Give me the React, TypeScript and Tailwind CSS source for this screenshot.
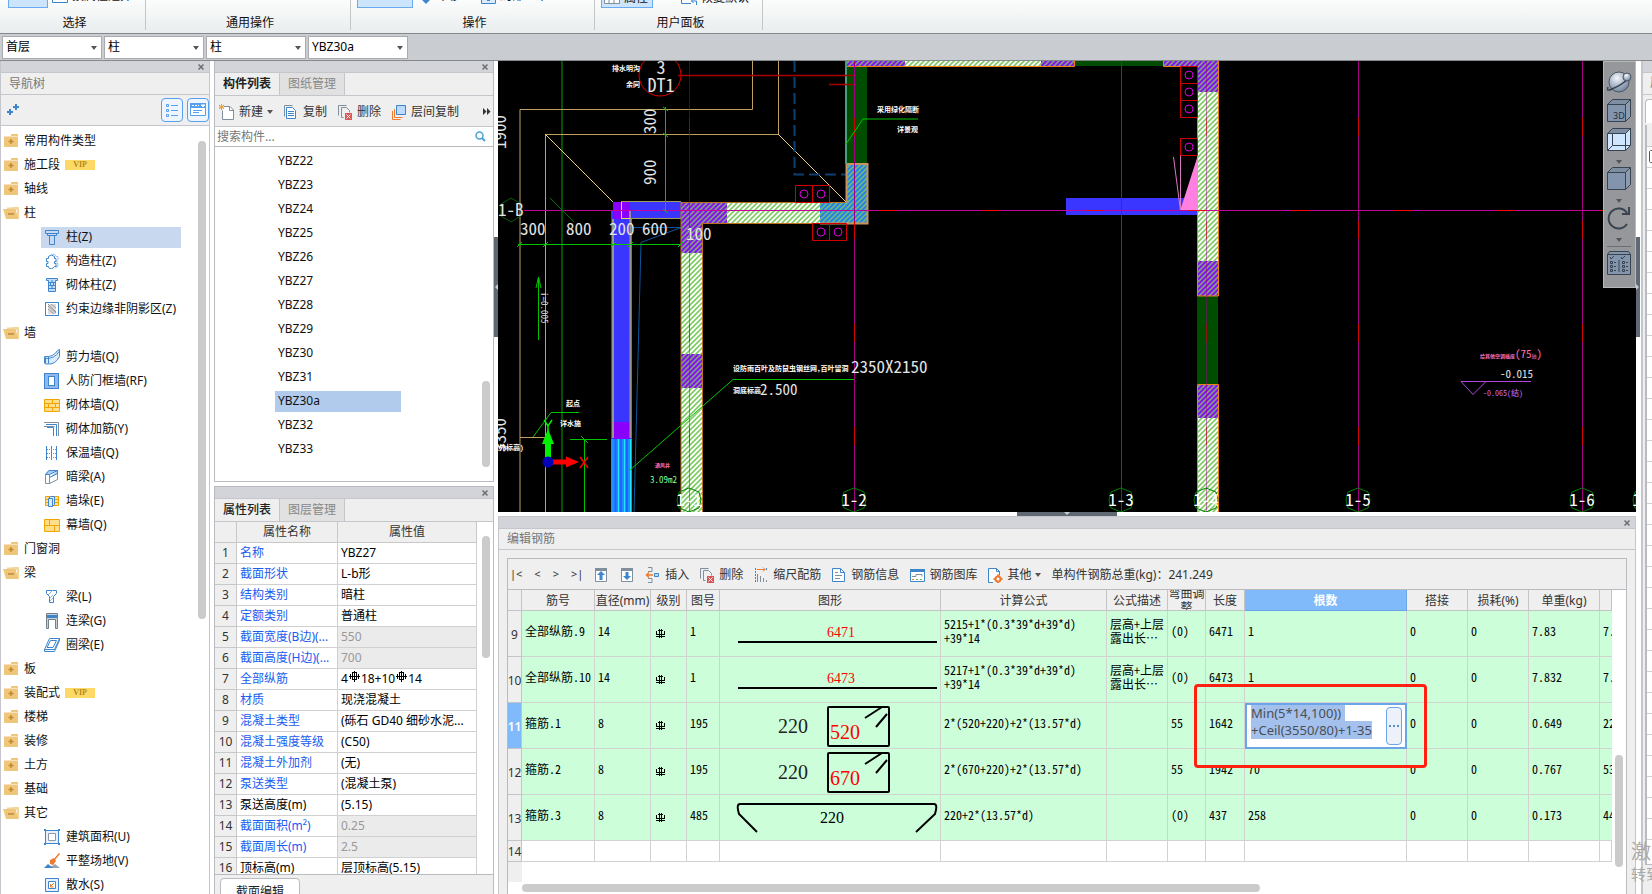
import React from "react";

const navItems = [
  { label: "常用构件类型", icon: "closed" },
  { label: "施工段", icon: "closed", vip: true },
  { label: "轴线", icon: "closed" },
  { label: "柱", icon: "open" },
  { label: "柱(Z)", icon: "column", child: true, active: true },
  { label: "构造柱(Z)", icon: "tieColumn", child: true },
  { label: "砌体柱(Z)", icon: "brickColumn", child: true },
  { label: "约束边缘非阴影区(Z)", icon: "edgeZone", child: true },
  { label: "墙", icon: "open" },
  { label: "剪力墙(Q)", icon: "shearWall", child: true },
  { label: "人防门框墙(RF)", icon: "doorFrame", child: true },
  { label: "砌体墙(Q)", icon: "brick", child: true },
  { label: "砌体加筋(Y)", icon: "rebar", child: true },
  { label: "保温墙(Q)", icon: "insulation", child: true },
  { label: "暗梁(A)", icon: "hiddenBeam", child: true },
  { label: "墙垛(E)", icon: "pier", child: true },
  { label: "幕墙(Q)", icon: "curtain", child: true },
  { label: "门窗洞", icon: "closed" },
  { label: "梁", icon: "open" },
  { label: "梁(L)", icon: "beam", child: true },
  { label: "连梁(G)", icon: "linkBeam", child: true },
  { label: "圈梁(E)", icon: "ringBeam", child: true },
  { label: "板", icon: "closed" },
  { label: "装配式", icon: "closed", vip: true },
  { label: "楼梯", icon: "closed" },
  { label: "装修", icon: "closed" },
  { label: "土方", icon: "closed" },
  { label: "基础", icon: "closed" },
  { label: "其它", icon: "open" },
  { label: "建筑面积(U)", icon: "area", child: true },
  { label: "平整场地(V)", icon: "site", child: true },
  { label: "散水(S)", icon: "apron", child: true },
];

const components = [
  "YBZ22", "YBZ23", "YBZ24", "YBZ25", "YBZ26", "YBZ27", "YBZ28",
  "YBZ29", "YBZ30", "YBZ31", "YBZ30a", "YBZ32", "YBZ33",
];

const properties: { name: string; value: React.ReactNode; black?: boolean; locked?: boolean }[] = [
  { name: "名称", value: "YBZ27" },
  { name: "截面形状", value: "L-b形" },
  { name: "结构类别", value: "暗柱" },
  { name: "定额类别", value: "普通柱" },
  { name: "截面宽度(B边)(...", value: "550", locked: true },
  { name: "截面高度(H边)(...", value: "700", locked: true },
  {
    name: "全部纵筋",
    value: (
      <span className="flex items-center">
        4<GradeMark />18+10<GradeMark />14
      </span>
    ),
  },
  { name: "材质", value: "现浇混凝土" },
  { name: "混凝土类型", value: "(砾石 GD40 细砂水泥..." },
  { name: "混凝土强度等级", value: "(C50)" },
  { name: "混凝土外加剂", value: "(无)" },
  { name: "泵送类型", value: "(混凝土泵)" },
  { name: "泵送高度(m)", value: "(5.15)", black: true },
  { name: "截面面积(m²)", value: "0.25", locked: true },
  { name: "截面周长(m)", value: "2.5", locked: true },
  { name: "顶标高(m)", value: "层顶标高(5.15)", black: true },
];

const bars = [
  { no: 9, name: "全部纵筋.9", dia: "14", code: "1", shape: "line", size: "6471", formula: "5215+1*(0.3*39*d+39*d)\n+39*14", desc: "层高+上层\n露出长…", bend: "(0)", len: "6471", count: "1", unit: "7.83", total: "7." },
  { no: 10, name: "全部纵筋.10", dia: "14", code: "1", shape: "line", size: "6473", formula: "5217+1*(0.3*39*d+39*d)\n+39*14", desc: "层高+上层\n露出长…", bend: "(0)", len: "6473", count: "1", unit: "7.832", total: "7." },
  { no: 11, name: "箍筋.1", dia: "8", code: "195", shape: "hoop", size: "520", formula: "2*(520+220)+2*(13.57*d)", desc: "", bend: "55", len: "1642", count: "", unit: "0.649", total: "22" },
  { no: 12, name: "箍筋.2", dia: "8", code: "195", shape: "hoop", size: "670", formula: "2*(670+220)+2*(13.57*d)", desc: "", bend: "55", len: "1942", count: "70", unit: "0.767", total: "53" },
  { no: 13, name: "箍筋.3", dia: "8", code: "485", shape: "tie", size: "220", formula: "220+2*(13.57*d)", desc: "", bend: "(0)", len: "437", count: "258", unit: "0.173", total: "44" },
];

// rebar grade sign as the property list shows it
function GradeMark() {
  return (
    <svg width="11" height="12" viewBox="0 0 11 12" className="mx-px -mt-1 shrink-0" fill="none" stroke="#000">
      <path d="M3 1.500h5M1.500 3v5M9.500 3v5M3 8.500h5M5.500 0v11M3.500 2v6M7.500 2v6M0 5.500h11" />
    </svg>
  );
}

// rebar grade sign of the bar table
function Grade() {
  return (
    <svg width="9" height="11" viewBox="0 0 9 11" className="shrink-0" fill="none" stroke="#000">
      <path d="M2 2.500h5M0.500 3v4M8.500 3v4M0 8.500h9M3.500 1v9M5.500 1v9M1 6.500h7" />
    </svg>
  );
}

function Caret() {
  return (
    <svg width="6" height="4" viewBox="0 0 6 4">
      <path d="M0 0h6L3 4z" fill="#555" />
    </svg>
  );
}

const blue = "#3d85cc";
const navIcons: Record<string, React.ReactNode> = {
  closed: (
    <>
      <path d="M8 1h7v2H8zM1 3.500h14V14H1z" fill="#efc67c" />
      <path d="M8 6v5M5.500 8.500h5" stroke="#c08a30" strokeWidth="1.500" />
    </>
  ),
  open: (
    <>
      <path d="M4 4V2.500h5L10 2h6v12h-2V5z" fill="#f3d59c" />
      <path d="M0 4h12.500l3 10H3z" fill="#efc67c" />
      <path d="M5 9h6" stroke="#c08a30" strokeWidth="1.500" />
    </>
  ),
  column: <path d="M1.500 1.500h13v3h-2v2h-9v-2h-2zM3 4.500h10M5.500 6.500v9h5v-9" fill="none" stroke={blue} />,
  tieColumn: (
    <>
      <path d="M7 2.500q4-3 5 1h2v3l-1 1v3h1v3h-2v2" fill="none" stroke="#9cc3ee" />
      <path d="M4.500 3.500q3-3 6 0v2h1.500v3h-1.500v2h1.500v3h-1.500q-3 4-6 1v-1h-2v-3h1.500v-2h-1.500v-3h2z" fill="#fff" stroke={blue} />
    </>
  ),
  brickColumn: (
    <>
      <path d="M2.500 1.500h11v2h-2v11h-7v-11h-2z" fill="#c3dcf7" stroke={blue} />
      <path d="M5 5.500h6M5 8.500h6M5 11.500h6M8 3v3M6.500 6v3M9.500 6v3M8 9v3" stroke={blue} />
    </>
  ),
  edgeZone: (
    <>
      <rect x="1.500" y="1.500" width="13" height="13" fill="#fff" stroke={blue} />
      <path d="M4 3h8v10H4z" fill="#ddd" />
      <path d="M4 5l8 7M4 8l6 5M7 3l5 4M4 3l8 8" stroke="#999" />
    </>
  ),
  shearWall: (
    <path d="M0.500 7.500q9 1 13-6l2-1v7q-4 8-11 7.500h-3l-1-1zM1.500 8.500v6M4.500 7.500v7M2 9.500q9 0 13-7" fill="#dcebfb" stroke={blue} />
  ),
  doorFrame: (
    <>
      <rect x="0.500" y="0.500" width="14" height="15" fill="#8db9f0" stroke={blue} />
      <rect x="4.500" y="3.500" width="6" height="9" fill="#fff" stroke={blue} />
    </>
  ),
  brick: (
    <>
      <path d="M0.500 2.500h15v12h-15z" fill="#ffdf8c" stroke="#f3a400" />
      <path d="M0 6.500h16M0 10.500h16M8.500 2v4M4.500 6v4M11.500 6v4M8.500 10v4" stroke="#f3a400" />
    </>
  ),
  rebar: (
    <>
      <path d="M0 1.500h14.500V15M0 5.500h10.500" fill="none" stroke="#7f8f9d" />
      <path d="M2 3.500h10.500V15M3 6.500h6.500V15" fill="none" stroke={blue} />
    </>
  ),
  insulation: (
    <>
      <path d="M2.500 1v14M7.500 1v14M12.500 1v14" stroke={blue} />
      <path d="M3 4.500h10M3 8.500h10M3 12.500h10" stroke="#7f8f9d" strokeDasharray="1 1" />
    </>
  ),
  hiddenBeam: (
    <>
      <path d="M1.500 5.500L5 1.500h8.500v9l-8 4-4 0z" fill="#fff" stroke="#7f8f9d" />
      <path d="M1.500 5.500L5 1.500h8.500l-8 4zM13.500 1.500v3l-8 4" fill="#a9cdf4" stroke={blue} />
      <path d="M5.500 6v9" stroke="#7f8f9d" />
    </>
  ),
  pier: (
    <>
      <path d="M1.500 3.500h13v9h-13z" fill="#ffdf8c" stroke="#f3a400" />
      <path d="M1 6.500h14M1 9.500h14" stroke="#f3a400" />
      <path d="M4.500 5.500h4v8h-4zM4.500 5.500l2-2h4v8l-2 2" fill="#dcebfb" stroke={blue} />
    </>
  ),
  curtain: (
    <>
      <path d="M0.500 2.500h15v12h-15z" fill="#ffdf8c" stroke="#f3a400" />
      <path d="M0 8.500h16M5.500 2v6M10.500 8v6" stroke="#f3a400" />
    </>
  ),
  beam: (
    <>
      <path d="M2.500 1.500h10v3l-3 3v6h-4v-6l-3-3z" fill="#fff" stroke={blue} />
      <path d="M4 6l5-5M6 9l3-3M6 12l3-3" stroke="#8db9e8" />
    </>
  ),
  linkBeam: (
    <>
      <path d="M2.500 0.500h11v15h-2v-9h-7v9h-2z" fill="#c8d0d8" stroke="#73808c" />
      <path d="M3 2h10v3H3z" fill={blue} />
    </>
  ),
  ringBeam: (
    <path d="M5.500 1.500h10l-5 11h-10zM0.500 12.500v2h10l5-11v-2M6.500 3.500h6l-3.500 7h-6z" fill="none" stroke={blue} />
  ),
  area: (
    <>
      <path d="M1.500 1.500h13v13h-13z" fill="#e8f1fb" stroke={blue} />
      <path d="M4.500 4.500h7v7h-7z" fill="#fff" stroke="#8b98a5" />
      <path d="M0 0h2v2H0zM14 0h2v2h-2zM0 14h2v2H0zM14 14h2v2h-2z" fill={blue} />
    </>
  ),
  site: (
    <>
      <path d="M3 15h13l-5-4-3 2z" fill="#9aa5ae" />
      <path d="M0 15h9l-5-4z" fill={blue} />
      <path d="M15.500 0.500l-5 6" stroke="#f07a2d" strokeWidth="1.500" />
      <path d="M6 7l4-2 2 3-3 4-3-1z" fill="#f07a2d" />
    </>
  ),
  apron: (
    <>
      <path d="M1.500 1.500h13v13h-13z" fill="#e8f1fb" stroke={blue} />
      <path d="M4.500 4.500h7v7h-7z" fill="#fff" stroke={blue} />
      <path d="M10 6l-3.500 3.500M6.500 7v3h3" fill="none" stroke="#f07a2d" />
    </>
  ),
};

const toolIcons: Record<string, React.ReactNode> = {
  create: (
    <>
      <path d="M5 2.500h6l3.500 3.500v9.500h-11v-9" fill="#fff" stroke="#7f8f9d" />
      <path d="M10.500 2.500v4h4" fill="none" stroke="#7f8f9d" />
      <path d="M0 1l5 4M5 1L0 5M2.500 0v6M0 3h5" stroke="#f39c1f" />
    </>
  ),
  copy: (
    <>
      <path d="M1.500 12.500v-11h8" fill="none" stroke="#7f8f9d" />
      <path d="M3.500 3.500h6l3 3v8h-9z" fill="#fff" stroke={blue} />
      <path d="M5 7.500h6M5 9.500h6M5 11.500h6" stroke={blue} />
    </>
  ),
  remove: (
    <>
      <path d="M1.500 11.500v-10h8M4.500 13.500v-10h5l3 3v2M4.500 13.500h2" fill="none" stroke="#7f8f9d" />
      <path d="M8 9h7v7H8z" fill="#dd5555" />
      <path d="M9.500 10.500l4 4M13.500 10.500l-4 4" stroke="#fff" />
    </>
  ),
  layers: (
    <>
      <path d="M1.500 7v8.500h8M3.500 5v8.500h8" fill="none" stroke="#f07a2d" />
      <path d="M5.500 1.500h9v9h-9z" fill="#bcdcff" stroke={blue} />
    </>
  ),
  up: (
    <>
      <path d="M2.500 3.500h11v11h-11z" fill="#fff" stroke="#7f8f9d" />
      <path d="M2 1h12v3H2z" fill="#7f8f9d" />
      <path d="M8 4l4 4H9.500v5h-3V8H4z" fill={blue} />
    </>
  ),
  down: (
    <>
      <path d="M2.500 3.500h11v11h-11z" fill="#fff" stroke="#7f8f9d" />
      <path d="M2 1h12v3H2z" fill="#7f8f9d" />
      <path d="M8 13l4-4H9.500V5h-3v4H4z" fill={blue} />
    </>
  ),
  insert: (
    <>
      <path d="M3 0.500h4v4H3M3 11.500h4v4H3" fill="none" stroke="#7f8f9d" />
      <path d="M1 8h7M4 5.500L1.500 8 4 10.500" fill="none" stroke="#f07a2d" strokeWidth="1.500" />
      <path d="M9.500 6.500h4v3h-4z" fill="#bcdcff" stroke={blue} />
    </>
  ),
  scale: (
    <>
      <path d="M2.500 1v14M13.500 1v3" stroke={blue} strokeDasharray="2 1" />
      <path d="M4 2.500h8M10 0.500l2 2-2 2" fill="none" stroke="#f07a2d" />
      <path d="M4.500 7v8M7.500 9v6M10.500 11v4M13.500 13v2" stroke="#7f8f9d" />
    </>
  ),
  info: (
    <>
      <path d="M1.500 1.500h8l4 4v9h-12z" fill="#fff" stroke={blue} />
      <path d="M9.500 1.500v4h4" fill="none" stroke={blue} />
      <path d="M4 5.500h3M4 8.500h7M4 11.500h5" stroke="#7f8f9d" />
    </>
  ),
  library: (
    <>
      <path d="M1.500 2.500h14v12h-14z" fill="#fff" stroke={blue} />
      <path d="M1 2h15v3H1z" fill={blue} />
      <path d="M3 9.500h4v-2h6v2" fill="none" stroke="#7f8f9d" />
      <path d="M3 12.500h2" stroke="#f07a2d" />
      <path d="M7 12.500h2M11 12.500h2" stroke="#58b85c" />
    </>
  ),
  other: (
    <>
      <path d="M6 15.500H1.500v-14h8l3 3v4M9.500 1.500v3h3" fill="#fff" stroke={blue} />
      <circle cx="11" cy="12" r="2.500" fill="#fff" stroke="#f07a2d" strokeWidth="2" />
      <path d="M11 7.500v2M11 14.500v1.500M6.500 12h2M13.500 12h2" stroke="#f07a2d" strokeWidth="2" />
    </>
  ),
};

function Icon({ d, size = 16 }: { d: React.ReactNode; size?: number }) {
  return (
    <svg width={size} height={size} viewBox="0 0 16 16" className="shrink-0">
      {d}
    </svg>
  );
}

function TitleStrip() {
  return (
    <div className="flex h-3 shrink-0 items-center justify-end border-b border-[#c4c6cc] bg-[#d3d4d9]">
      <button aria-label="关闭" className="flex h-3 w-4 items-center justify-center">
        <svg width="6" height="6" viewBox="0 0 6 6">
          <path d="M0.500 0.500l5 5M5.500 0.500l-5 5" stroke="#6d6d6d" strokeWidth="1.500" />
        </svg>
      </button>
    </div>
  );
}

function Tabs({ first, second, bold }: { first: string; second: string; bold?: boolean }) {
  return (
    <div className="flex h-[23px] shrink-0 border-b border-[#c4c6cc] bg-[#efefef]">
      <button className={`w-[65px] border-r border-[#c4c6cc] ${bold ? "font-semibold" : "font-medium"} text-[#222]`}>{first}</button>
      <button className="w-[65px] border-r border-[#c4c6cc] bg-[#e1e1e1] text-[#888]">{second}</button>
    </div>
  );
}

function Ribbon() {
  const label = "h-[25px] shrink-0 pt-1.5 text-center leading-[18px]";
  return (
    <header className="flex h-[34px] shrink-0 overflow-hidden border-b border-[#85898c] bg-gradient-to-b from-[#fbfcfc] to-[#e9edee]">
      <div className="flex w-[145px] flex-col justify-end">
        <div className="flex h-7 shrink-0 gap-1 pl-2">
          <button aria-label="选择" className="w-10 border border-[#69aaf0] bg-[#cce4fc]" />
          <button className="flex items-center gap-1 pt-1">
            <svg width="16" height="16" viewBox="0 0 16 16"><path d="M0.500 0.500h15v14h-15z" fill="#fff" stroke={blue} /></svg>
            按属性选择
          </button>
        </div>
        <div className={`${label} pl-1`}>选择</div>
      </div>
      <div className="mb-[3px] w-px bg-[#c3c5c7]" />
      <div className="flex w-[204px] flex-col justify-end">
        <div className={`${label} pl-1`}>通用操作</div>
      </div>
      <div className="mb-[3px] w-px bg-[#c3c5c7]" />
      <div className="flex w-[243px] flex-col justify-end">
        <div className="flex h-7 shrink-0 pl-1.5">
          <button aria-label="操作" className="w-14 border border-[#69aaf0] bg-[#cce4fc]" />
          <button className="flex w-[68px] items-center gap-1.5 pt-1 pl-2">
            <svg width="10" height="16" viewBox="0 0 10 16"><path d="M5 0v15M2 11.500l3 3 3-3" stroke={blue} strokeWidth="2" fill="none" /></svg>
            平移
          </button>
          <button className="flex items-center gap-1 pt-1">
            <svg width="15" height="16" viewBox="0 0 15 16"><path d="M0.500 0.500h14v15h-14z" fill="#dcebfb" stroke={blue} /><path d="M6 11h3v2H6z" fill={blue} /></svg>
            局部三维
          </button>
        </div>
        <div className={`${label} pl-1`}>操作</div>
      </div>
      <div className="mb-[3px] w-px bg-[#c3c5c7]" />
      <div className="flex w-[167px] flex-col justify-end">
        <div className="flex h-[26px] shrink-0 pl-1.5">
          <button className="flex w-[52px] items-center gap-1 border border-[#69aaf0] bg-[#cce4fc] pt-1.5 pl-0.5">
            <svg width="16" height="16" viewBox="0 0 16 16"><path d="M0.500 0.500h15v13h-15zM5 0v13M10 0v13" fill="#fff" stroke="#7f8f9d" /></svg>
            属性
          </button>
          <button className="ml-7 flex items-center gap-1 pt-1.5">
            <svg width="16" height="16" viewBox="0 0 16 16"><path d="M10 13.500H0.500V0.500h13v8M15.500 15v-4h-5m2-2l-2 2 2 2" fill="none" stroke={blue} /></svg>
            恢复默认
          </button>
        </div>
        <div className={`${label} pl-1`}>用户面板</div>
      </div>
      <div className="mb-[3px] w-px bg-[#c3c5c7]" />
    </header>
  );
}

function Selectors() {
  const values = [["楼层", "首层"], ["类别", "柱"], ["构件类型", "柱"], ["构件", "YBZ30a"]];
  return (
    <div className="flex h-[27px] shrink-0 items-center gap-0.5 border-b border-[#85898c] bg-[#c9ccd1] pl-0.5">
      {values.map(([label, value]) => (
        <div key={label} className="relative">
          <select aria-label={label} className="block h-[23px] w-[100px] appearance-none border border-[#a9abae] bg-white pl-[3px] text-black">
            <option>{value}</option>
          </select>
          <span className="pointer-events-none absolute top-2.5 right-[5px]">
            <Caret />
          </span>
        </div>
      ))}
    </div>
  );
}

function NavTree() {
  return (
    <aside className="flex w-[210px] shrink-0 flex-col border-x border-[#c4c6cc] bg-white">
      <TitleStrip />
      <div className="flex h-[22px] shrink-0 items-center border-b border-[#c4c6cc] bg-[#efefef] pl-2 text-[#777]">导航树</div>
      <div className="flex h-[31px] shrink-0 items-center gap-1 border-b border-[#c4c6cc] bg-[#efefef] pl-1.5">
        <button aria-label="展开" className="mr-auto">
          <svg width="12" height="12" viewBox="0 0 12 12"><path d="M3 5v6M0 8h6M9 0v6M6 3h6" stroke={blue} strokeWidth="2" /></svg>
        </button>
        <button aria-label="列表" className="flex h-6 w-[22px] items-center justify-center rounded-sm border border-[#55a0f0] bg-[#eef5fd]">
          <svg width="14" height="14" viewBox="0 0 14 14" fill="none" stroke="#55a0f0"><path d="M1.500 1.500h2v2h-2zM1.500 6.500h2v2h-2zM1.500 11.500h2v2h-2zM6 2.500h7M6 7.500h7M6 12.500h7" /></svg>
        </button>
        <button aria-label="面板" className="flex h-6 w-[22px] items-center justify-center rounded-sm border border-[#55a0f0] bg-[#eef5fd]">
          <svg width="16" height="14" viewBox="0 0 16 14" className="shrink-0"><path d="M0.500 0.500h15v12h-15z" fill="#fff" stroke="#55a0f0" /><path d="M0 0h16v5H0z" fill="#55a0f0" /><path d="M2 2.500h2M5 2.500h2M8 2.500h1M11 2h4l-2 2z" stroke="#fff" fill="#fff" /><path d="M3 7.500h9M3 9.500h6" stroke="#55a0f0" /></svg>
        </button>
      </div>
      <div className="flex min-h-0 flex-1 overflow-hidden pt-[3px]">
        <ul className="min-w-0 flex-1">
          {navItems.map((item, index) => (
            <li key={index} className={`flex h-6 items-center ${item.child ? "pl-10" : "gap-1 pl-0.5"}`}>
              {item.child ? (
                <a href="#" className={`flex h-[21px] shrink-0 items-center gap-1.5 pr-1 pl-[3px] whitespace-nowrap ${item.active ? "w-[140px] bg-[#c8d8ef]" : ""}`}>
                  <Icon d={navIcons[item.icon]} />
                  {item.label}
                </a>
              ) : (
                <>
                  <Icon d={navIcons[item.icon]} />
                  <a href="#" className="ml-px">{item.label}</a>
                  {item.vip && (
                    <span className="ml-px flex h-2.5 w-[30px] items-center justify-center bg-[#ffd966] font-['Liberation_Serif',serif] text-[8px] font-bold text-[#b08a1a]">VIP</span>
                  )}
                </>
              )}
            </li>
          ))}
        </ul>
        <div className="mt-3 mr-[3px] h-[478px] w-2 rounded-full bg-[#cbcbcb]" />
      </div>
    </aside>
  );
}

function ComponentList() {
  const tools = [
    ["create", "新建"],
    ["copy", "复制"],
    ["remove", "删除"],
    ["layers", "层间复制"],
  ];
  return (
    <section className="flex h-[421px] shrink-0 flex-col border border-t-0 border-[#b9bbc0] bg-white">
      <TitleStrip />
      <Tabs first="构件列表" second="图纸管理" bold />
      <div className="flex h-[31px] shrink-0 items-center gap-2.5 border-b border-[#c4c6cc] bg-[#efefef] pt-px pl-1 text-[#333]">
        {tools.map(([icon, label], index) => (
          <button key={icon} className="flex items-center gap-1 whitespace-nowrap">
            <Icon d={toolIcons[icon]} />
            {label}
            {index === 0 && <Caret />}
          </button>
        ))}
        <button aria-label="更多" className="mr-0.5 ml-auto">
          <svg width="8" height="7" viewBox="0 0 8 7"><path d="M0 0l3.500 3.500L0 7zM4 0l3.500 3.500L4 7z" fill="#333" /></svg>
        </button>
      </div>
      <div className="flex h-5 shrink-0 items-center border-b border-[#b9bbc0] bg-white pr-[7px] pl-0.5">
        <input aria-label="搜索构件" placeholder="搜索构件..." className="min-w-0 flex-1 placeholder:text-[#777]" />
        <svg width="11" height="11" viewBox="0 0 11 11" fill="none" stroke="#4ba3d8"><circle cx="4.500" cy="4.500" r="3.500" strokeWidth="1.500" /><path d="M7 7l3 3" strokeWidth="2" /></svg>
      </div>
      <div className="flex min-h-0 flex-1 pt-0.5">
        <ul className="flex-1 pl-[60px]">
          {components.map((name) => (
            <li key={name} className="flex h-6 items-center">
              <span className={`flex h-[21px] w-[126px] items-center pl-[3px] ${name === "YBZ30a" ? "bg-[#b1cbec]" : ""}`}>{name}</span>
            </li>
          ))}
        </ul>
        <div className="mr-[3px] mb-3.5 h-[86px] w-2 self-end rounded-full bg-[#cbcbcb]" />
      </div>
    </section>
  );
}

function PropertyPanel() {
  return (
    <section className="mt-1 flex min-h-0 flex-1 flex-col overflow-hidden border-x border-t border-[#b9bbc0] bg-[#efefef]">
      <TitleStrip />
      <Tabs first="属性列表" second="图层管理" />
      <div className="flex h-[353px] shrink-0 overflow-hidden border-b border-[#b9bbc0] bg-white">
        <table className="w-full table-fixed border-separate border-spacing-0 self-start text-left whitespace-nowrap">
          <colgroup>
            <col className="w-[22px]" />
            <col className="w-[101px]" />
            <col />
          </colgroup>
          <thead>
            <tr className="h-[21px] bg-[#efefef] text-center text-[#333]">
              <th className="border-r border-b border-[#c8c8c8] p-0" />
              <th className="border-r border-b border-[#c8c8c8] p-0 text-center font-normal">属性名称</th>
              <th className="border-r border-b border-[#c8c8c8] p-0 text-center font-normal">属性值</th>
            </tr>
          </thead>
          <tbody>
            {properties.map((row, index) => (
              <tr key={index} className="h-[21px]">
                <td className="border-r border-b border-[#c8c8c8] bg-[#efefef] p-0 text-center text-[#333]">{index + 1}</td>
                <td className={`overflow-hidden border-r border-b border-[#d0d0d0] p-0 pl-[3px] ${row.black ? "text-black" : "text-[#1a5cf0]"}`}>{row.name}</td>
                <td className={`overflow-hidden border-r border-b border-[#d0d0d0] p-0 pl-[3px] ${row.locked ? "bg-[#ebebeb] text-[#999]" : "text-black"}`}>{row.value}</td>
              </tr>
            ))}
          </tbody>
        </table>
        <div className="mt-3.5 mr-[3px] ml-[5px] h-[122px] w-2 shrink-0 rounded-full bg-[#cbcbcb]" />
      </div>
      <div className="pt-[3px] pl-[5px]">
        <button className="h-7 w-20 rounded-t-sm border border-[#b9bbc0] bg-white text-[#222]">截面编辑</button>
      </div>
    </section>
  );
}

function HatchBlock({ x, y, w, h, fill }: { x: number; y: number; w: number; h: number; fill: string }) {
  return <rect x={x} y={y} width={w} height={h} fill={`url(#${fill})`} />;
}

const gridAxes = [
  { x: 689, label: "1-1" },
  { x: 854, label: "1-2" },
  { x: 1121, label: "1-3" },
  { x: 1206, label: "1-4" },
  { x: 1358, label: "1-5" },
  { x: 1582, label: "1-6" },
  { x: 1645, label: "1-7" },
];

const embedded = [
  [795, 185], [812, 185], [812, 223], [829, 223],
  [1180, 66], [1180, 83], [1180, 100], [1180, 138],
];

function Drawing() {
  return (
    <svg
      className="absolute inset-0 h-full w-full bg-black"
      viewBox="498 61 1138 451"
      preserveAspectRatio="xMinYMin slice"
      fontFamily="'Noto Sans Mono CJK SC','Noto Sans CJK SC',monospace"
      fill="#e4e4e4"
    >
      <defs>
        <pattern id="light" width="5" height="5" patternUnits="userSpaceOnUse">
          <rect width="5" height="5" fill="#fff" />
          <path d="M-1 1l2-2M0 5l5-5M4 6l2-2" stroke="#7dcb62" strokeWidth="1.600" />
        </pattern>
        <pattern id="violet" width="5" height="5" patternUnits="userSpaceOnUse">
          <rect width="5" height="5" fill="#8414f2" />
          <path d="M-1 1l2-2M0 5l5-5M4 6l2-2" stroke="#85a878" strokeWidth="1.500" />
        </pattern>
        <pattern id="azure" width="5" height="5" patternUnits="userSpaceOnUse">
          <rect width="5" height="5" fill="#2080f0" />
          <path d="M-1 1l2-2M0 5l5-5M4 6l2-2" stroke="#6fb880" strokeWidth="1.600" />
        </pattern>
      </defs>

      {/* outline of the terrace */}
      <path d="M562 61v451" stroke="#064d06" strokeWidth="2" />
      <g fill="none" stroke="#c0a060">
        <path d="M520 512V109.500H752.500V61M545.500 512V134.500H778.500V61M520 437.500h25" />
        <path d="M545 134l68 68M778 134l68 68" stroke="#f0cf80" />
      </g>
      <path d="M794.500 61v113.500h52" fill="none" stroke="#0d3f75" strokeWidth="2" strokeDasharray="11 5" />
      <path d="M631 227.500h50l-40 15-7 270" fill="none" stroke="#0a569e" />

      {/* blue walls */}
      <rect x="630" y="202" width="51" height="17" fill="#3a36ff" />
      <rect x="611" y="211" width="21" height="228" fill="#3a36ff" />
      <rect x="613" y="202" width="17" height="17" fill="#8a00ff" />
      <rect x="613" y="422" width="17" height="17" fill="#8a00ff" />
      <path d="M613 219v219M630.500 219v219" stroke="#98958a" strokeWidth="2" />
      <path d="M681 201.500h-59.500v17H681" fill="none" stroke="#a39a60" />
      <path d="M614 210.500h16v8h-8.500v-17" fill="none" stroke="#e8e060" />
      <rect x="611" y="439" width="21" height="73" fill="#1e8fff" />
      <path d="M615.500 439v73M621 439v73M627 439v73" stroke="#2860ff" strokeWidth="2" />
      <path d="M618.500 439v73M624.500 439v73M630.500 439v73" stroke="#22e5ff" />
      <rect x="1066" y="198" width="132" height="17" fill="#3a36ff" />

      {/* shear walls */}
      <rect x="846" y="61" width="21" height="103" fill="#004d00" />
      <rect x="1074" y="61" width="90" height="5" fill="#004d00" />
      <HatchBlock x={681} y={202} w={46} h={21} fill="violet" />
      <HatchBlock x={681} y={223} w={21} h={30} fill="violet" />
      <HatchBlock x={727} y={202} w={93} h={21} fill="light" />
      <HatchBlock x={820} y={202} w={47} h={21} fill="azure" />
      <HatchBlock x={846} y={164} w={21} h={38} fill="azure" />
      <HatchBlock x={681} y={253} w={21} h={259} fill="light" />
      <HatchBlock x={681} y={354} w={21} h={34} fill="violet" />
      <HatchBlock x={846} y={61} w={59} h={5} fill="violet" />
      <HatchBlock x={905} y={61} w={136} h={5} fill="light" />
      <HatchBlock x={1041} y={61} w={34} h={5} fill="violet" />
      <HatchBlock x={1163} y={61} w={55} h={5} fill="violet" />
      <HatchBlock x={1198} y={61} w={20} h={31} fill="violet" />
      <HatchBlock x={1198} y={92} w={20} h={169} fill="light" />
      <HatchBlock x={1198} y={261} w={20} h={35} fill="violet" />
      <rect x="1197" y="296" width="21" height="88" fill="#004d00" />
      <HatchBlock x={1198} y={384} w={20} h={34} fill="violet" />
      <HatchBlock x={1198} y={418} w={20} h={94} fill="light" />
      <g fill="none" stroke="#f08010">
        <path d="M681 512V202.500h165M702.500 512V223.500H820" stroke="#c07020" />
        <path d="M846.500 66.500h228V61M1163.500 61v5.500h34M1197.500 66v230h21V61M1197.500 512V384.500h21V512" />
      </g>
      <path d="M820 223.500h47.500V164h-21v38" fill="none" stroke="#c8935c" strokeWidth="2" />
      <path d="M846 61v103" stroke="#4b9c80" strokeWidth="2" />

      {/* door leaf */}
      <path d="M1198 155v56h-18z" fill="#ff80e0" />
      <path d="M1173.500 157l7 54V155" fill="none" stroke="#d878c0" />

      {/* axes */}
      <path d="M524 210.500h1079" stroke="#c4009a" />
      <path d="M879 210.500h724" stroke="#f00" strokeDasharray="18 85" />
      {gridAxes.map(({ x, label }) => {
        const hidden = x === 689 || x === 1206;
        return (
          <g key={label}>
            <path d={`M${x}.500 61v451`} stroke="#a00080" opacity={hidden ? 0.5 : 1} />
            <path d={`M${x}.500 118v400`} stroke="#d00000" strokeDasharray="18 85" opacity={hidden ? 0.5 : 1} />
            <path d={`M${x} 488l10 4 2 8-2 8-10 4-10-4-2-8 2-8z`} fill="none" stroke="#008000" />
            <text x={x} y="506" textAnchor="middle" fontSize="17" fill="#fff">{label}</text>
          </g>
        );
      })}
      <path d="M511 198l10 6v12l-10 6-10-6v-12z" fill="none" stroke="#0a5a0a" />
      <text x="498" y="216" fontSize="17">1-B</text>

      {embedded.map(([x, y]) => (
        <g key={`${x}-${y}`} fill="none">
          <path d={`M${x}.500 ${y}.500h17v17h-17z`} stroke="#d40000" />
          <circle cx={x + 9} cy={y + 9} r="4" stroke="#d800d8" />
        </g>
      ))}

      {/* dimensions */}
      <g fill="none" stroke="#00c400">
        <path d="M665.500 107v104M663 107l5 4M663 133l5 4M663 209l5 4M518 244.500h163" />
        <path d="M517 247l5-5M543 247l5-5M611 247l5-5M628 247l5-5M678 247l5-5" />
        <path d="M538.500 340v-62M536 288l2.500-11 2.500 11" />
        <path d="M846 144l17-25h55M630 470l103-90.500h121" />
        <path d="M533 437l18-24.500h28M570 439.500h37M584.500 439v73M581 436l7 7" />
      </g>
      <path d="M550 198l24 24" stroke="#0a700a" />
      <g fontSize="17">
        <text x="520" y="235">300</text>
        <text x="566" y="235">800</text>
        <text x="609" y="235">200</text>
        <text x="642" y="235">600</text>
        <text x="686" y="240">100</text>
        <text transform="translate(656 134) rotate(-90)">300</text>
        <text transform="translate(656 185) rotate(-90)">900</text>
        <text transform="translate(506 149) rotate(-90)">1900</text>
        <text transform="translate(506 452) rotate(-90)">3350</text>
        <text x="851" y="373">2350X2150</text>
        <text x="760" y="395" fontSize="15">2.500</text>
      </g>
      <text transform="translate(541 292) rotate(90)" fontSize="9">i=0.005</text>

      <circle cx="660" cy="75" r="21" fill="none" stroke="#e00000" />
      <path d="M678 75.500h176M829 84.500h25" stroke="#a80000" strokeWidth="1.500" />
      <text x="661" y="74" fontSize="18" textAnchor="middle">3</text>
      <text x="661" y="92" fontSize="18" textAnchor="middle">DT1</text>

      <g fontSize="7" fontWeight="bold" fill="#fff">
        <text x="612" y="71">排水明沟</text>
        <text x="626" y="87">余同</text>
        <text x="877" y="112">采用绿化隔断</text>
        <text x="897" y="132">详景观</text>
        <text x="733" y="371">设防雨百叶及防鼠虫钢丝网,百叶留洞</text>
        <text x="733" y="393">洞底标高</text>
        <text x="566" y="406">起点</text>
        <text x="560" y="426">详水施</text>
        <text x="492" y="450">室外标高)</text>
      </g>
      <text x="655" y="467" fontSize="5" fontWeight="bold" fill="#ff70b8">通风井</text>
      <text x="650" y="483" fontSize="9" fill="#80ffa0">3.09m2</text>

      <g fontSize="11">
        <text x="1480" y="358" fill="#ff70b8"><tspan fontSize="5" fontWeight="bold">给其他空调插座</tspan>(75<tspan fontSize="5">轴</tspan>)</text>
        <text x="1500" y="378">-0.015</text>
        <text x="1483" y="396" fontSize="8" fill="#d070ff">-0.065(结)</text>
      </g>
      <path d="M1531 381.500h-70l12 13 13-13" fill="none" stroke="#b048e0" />

      {/* coordinate origin */}
      <path d="M545 462v-18h-3l6-15 6 15h-3v18z" fill="#00f000" />
      <path d="M548 459.500h18v-3l13 5.500-13 5.500v-3h-18z" fill="#f00" />
      <circle cx="548" cy="462" r="5.500" fill="#0000b8" />
      <path d="M544 420l4 6 4-6M548 426v6" fill="none" stroke="#00f000" strokeWidth="1.500" />
      <path d="M580 457l8 11M588 457l-8 11" stroke="#f00" strokeWidth="1.500" />
    </svg>
  );
}

function Cube({ glass, label }: { glass?: boolean; label?: string }) {
  return (
    <svg width="24" height="24" viewBox="0 0 24 24" fill="none" stroke="#39434f">
      <path d="M0.500 5.500l5-5h18l-5 5z" fill="#7d8da2" />
      <path d="M23.500 0.500v17l-5 5v-17z" fill={glass ? "#cfe6ff" : "#8b9bb0"} />
      <path d="M0.500 5.500h18v17h-18z" fill={glass ? "#cfe6ff" : "#8395ad"} />
      {glass && <path d="M5.500 6v11.500h18M5.500 17.500l-5 5" />}
      {label && <text x="6" y="20" fontSize="9" fill="#222c38" stroke="none">{label}</text>}
    </svg>
  );
}

function ViewToolbar() {
  const button = "flex h-[29px] shrink-0 items-start";
  return (
    <div className="absolute top-0 right-0 flex h-[227px] w-[33px] flex-col items-center border border-[#b6b8ba] bg-[#95979b] pt-2 pr-0.5">
      <button aria-label="动态观察" className={button}>
        <svg width="26" height="24" viewBox="0 0 26 24">
          <defs>
            <radialGradient id="ball" cx=".4" cy=".3" r=".7"><stop offset="0" stopColor="#f4f8fc" /><stop offset="1" stopColor="#72859e" /></radialGradient>
          </defs>
          <circle cx="13" cy="12" r="10" fill="url(#ball)" stroke="#4b5664" />
          <path d="M2 17q-2 5 4 2Q16 15 23 8" fill="none" stroke="#39434f" strokeWidth="1.500" />
          <circle cx="21" cy="7" r="4" fill="url(#ball)" stroke="#4b5664" />
        </svg>
      </button>
      <button aria-label="三维" className={button}><Cube label="3D" /></button>
      <button aria-label="线框" className={button}><Cube glass /></button>
      <span className="flex h-2.5 items-center"><Caret /></span>
      <button aria-label="视图" className={button}><Cube /></button>
      <span className="flex h-2.5 items-center"><Caret /></span>
      <button aria-label="旋转" className={button}>
        <svg width="24" height="24" viewBox="0 0 24 24" fill="none" stroke="#39434f" strokeWidth="2">
          <path d="M20 18a10 10 0 1 1 0-11" />
          <path d="M22 1v7h-7" />
        </svg>
      </button>
      <span className="flex h-2.5 items-center"><Caret /></span>
      <div className="mt-px mb-1 h-px w-6 shrink-0 bg-[#6a6d71]" />
      <button aria-label="显示设置" className={button}>
        <svg width="24" height="24" viewBox="0 0 24 24" fill="none" stroke="#39434f">
          <path d="M0.500 3.500l2-3h19l2 3v20h-23z" fill="#8395ad" />
          <path d="M0 3.500h24M12 9v12M3 6l1 2 3-3M14 6l1 2 3-3" />
          <path d="M3.500 10.500h2v2h-2zM3.500 14.500h2v2h-2zM3.500 18.500h2v2h-2zM15.500 10.500h2v2h-2zM15.500 14.500h2v2h-2zM15.500 18.500h2v2h-2zM7 11.500h2M7 15.500h2M7 19.500h2M19 11.500h2M19 15.500h2M19 19.500h2" />
        </svg>
      </button>
    </div>
  );
}

function Shape({ kind, size }: { kind: string; size: string }) {
  return (
    <svg width="220" height="44" viewBox="0 0 220 44" className="mx-auto block" fill="none" stroke="#000" strokeWidth="2" fontFamily="'Liberation Serif',serif">
      {kind === "line" && (
        <>
          <text x="121" y="25" fontSize="14" textAnchor="middle" fill="#f00" stroke="none">{size}</text>
          <path d="M18 30h199" />
        </>
      )}
      {kind === "hoop" && (
        <>
          <text x="73" y="29" fontSize="20" textAnchor="middle" fill="#222" stroke="none">220</text>
          <rect x="108" y="3" width="61" height="39" rx="1" />
          <path d="M145 14l17-11M156 23l11-13" />
          <text x="125" y="35" fontSize="20" textAnchor="middle" fill="#f00" stroke="none">{size}</text>
        </>
      )}
      {kind === "tie" && (
        <>
          <path d="M37 36L19 18Q16 8 20 8h194q4 0 1 10L196 36" />
          <text x="112" y="27" fontSize="16" textAnchor="middle" fill="#000" stroke="none">{size}</text>
        </>
      )}
    </svg>
  );
}

function CountEditor() {
  return (
    <div className="relative">
      <div className="flex h-[46px] items-start border-2 border-[#6ba5e7] bg-white pl-1">
        <textarea
          aria-label="根数"
          ref={(el) => {
            el?.focus();
            el?.select();
          }}
          className="h-[40px] min-w-0 flex-1 resize-none overflow-hidden text-[13px] leading-[17px] text-[#4a4f57] outline-none selection:bg-[#a3c1ec] selection:text-[#4a4f57]"
          defaultValue={"Min(5*14,100))\n+Ceil(3550/80)+1-35"}
        />
        <button aria-label="编辑" className="mt-0.5 mr-[3px] flex h-[38px] w-4 items-center justify-center rounded-sm border border-[#6ba5e7] bg-[#edf2fa]">
          <svg width="10" height="2" viewBox="0 0 10 2"><path d="M0 0h2v2H0zM4 0h2v2H4zM8 0h2v2H8z" fill="#4b94d8" /></svg>
        </button>
      </div>
      <div className="pointer-events-none absolute -top-[19px] -left-[51px] h-[84px] w-[233px] rounded border-[3px] border-[#ff2012]" />
    </div>
  );
}

function RebarTable() {
  const headers = ["", "筋号", "直径(mm)", "级别", "图号", "图形", "计算公式", "公式描述", "弯曲调整", "长度", "根数", "搭接", "损耗(%)", "单重(kg)", ""];
  const cell = "border-r border-b border-[#d0d3d0] p-0 pb-1.5 pl-[3px]";
  return (
    <table className="w-full table-fixed border-separate border-spacing-0 text-left">
      <colgroup>
        <col className="w-3.5" />
        <col className="w-[73px]" />
        <col className="w-14" />
        <col className="w-9" />
        <col className="w-[33px]" />
        <col />
        <col className="w-[166px]" />
        <col className="w-[61px]" />
        <col className="w-[38px]" />
        <col className="w-[39px]" />
        <col className="w-[162px]" />
        <col className="w-[61px]" />
        <col className="w-[61px]" />
        <col className="w-[71px]" />
        <col className="w-3" />
      </colgroup>
      <thead>
        <tr>
          {headers.map((header, index) => (
            <th key={index} className={`border-r border-b p-0 font-normal ${header === "根数" ? "border-[#6ba5e7] bg-[#80bafa] font-semibold text-white" : "border-[#c4c4c4] bg-[#efefef] text-[#333]"}`}>
              <div className={`flex h-5 items-center justify-center overflow-hidden pt-px text-center leading-[14px] ${header.length > 4 || index === 7 ? "whitespace-nowrap" : ""}`}>{header}</div>
            </th>
          ))}
        </tr>
      </thead>
      <tbody className="font-['Noto_Sans_Mono_CJK_SC','Noto_Sans_CJK_SC',monospace] leading-[14px] whitespace-pre text-black">
        {bars.map((bar) => (
          <tr key={bar.no} className="h-[46px] bg-[#ccffd9]">
            <td className={`border-r border-b border-[#c4c4c4] p-0 font-['Noto_Sans',sans-serif] ${bar.no === 11 ? "bg-[#80bafa] font-semibold text-white" : "bg-[#efefef] text-[#333]"}`}>
              <div className="flex justify-center pt-0.5">{bar.no}</div>
            </td>
            <td className={cell}>{bar.name}</td>
            <td className={cell}>{bar.dia}</td>
            <td className={cell}><span className="block pt-1.5 pl-0.5"><Grade /></span></td>
            <td className={cell}>{bar.code}</td>
            <td className="overflow-hidden border-r border-b border-[#d0d3d0] p-0"><Shape kind={bar.shape} size={bar.size} /></td>
            <td className={cell}>{bar.formula}</td>
            <td className={cell}>{bar.desc}</td>
            <td className={cell}>{bar.bend}</td>
            <td className={cell}>{bar.len}</td>
            <td className={bar.no === 11 ? "p-0 font-['Noto_Sans',sans-serif]" : cell}>{bar.no === 11 ? <CountEditor /> : bar.count}</td>
            <td className={cell}>0</td>
            <td className={cell}>0</td>
            <td className={cell}>{bar.unit}</td>
            <td className="overflow-hidden border-b border-[#d0d3d0] p-0 pb-1.5 pl-[3px]">{bar.total}</td>
          </tr>
        ))}
        <tr className="h-[21px]">
          <td className="border-r border-b border-[#c4c4c4] bg-[#efefef] p-0 font-['Noto_Sans',sans-serif] text-[#333]"><div className="flex justify-center pt-px">14</div></td>
          {headers.slice(1).map((_, index) => (
            <td key={index} className="border-r border-b border-[#d0d3d0] bg-white p-0" />
          ))}
        </tr>
      </tbody>
    </table>
  );
}

function RebarEditor() {
  const tools = [
    ["insert", "插入"],
    ["remove", "删除"],
    ["scale", "缩尺配筋"],
    ["info", "钢筋信息"],
    ["library", "钢筋图库"],
    ["other", "其他"],
  ];
  return (
    <section className="flex min-h-0 flex-1 flex-col border border-b-0 border-[#c4c6cc] bg-[#efefef]">
      <TitleStrip />
      <div className="flex h-[21px] shrink-0 items-center border-b border-[#c4c6cc] pl-2 text-[#777]">编辑钢筋</div>
      <div className="mt-2 mr-2 ml-2 flex min-h-0 flex-1 flex-col overflow-hidden border border-b-0 border-[#b9bbc0]">
        <div className="flex h-[31px] shrink-0 items-center gap-2.5 border-b border-[#b9bbc0] pt-px text-[#333]">
          <div className="flex items-center gap-3 pl-0.5 text-[11px]">
            <button aria-label="首条">|&lt;</button>
            <button aria-label="上一条">&lt;</button>
            <button aria-label="下一条">&gt;</button>
            <button aria-label="末条">&gt;|</button>
          </div>
          <button aria-label="上移"><Icon d={toolIcons.up} /></button>
          <button aria-label="下移"><Icon d={toolIcons.down} /></button>
          {tools.map(([icon, label]) => (
            <button key={icon} className="flex items-center gap-1 whitespace-nowrap">
              <Icon d={toolIcons[icon]} />
              {label}
              {icon === "other" && <Caret />}
            </button>
          ))}
          <span className="whitespace-nowrap">单构件钢筋总重(kg)：241.249</span>
        </div>
        <div className="flex min-h-0 flex-1 bg-white">
          <div className="flex min-w-0 flex-1 flex-col">
            <RebarTable />
            <div className="h-5 w-3.5 bg-[#efefef]" />
            <div className="mt-0.5 ml-3.5 h-2 w-[738px] rounded-full bg-[#cbcbcb]" />
          </div>
          <div className="mx-[3px] mt-[165px] h-28 w-2 rounded-full bg-[#cbcbcb]" />
        </div>
      </div>
    </section>
  );
}

function RightPanel() {
  return (
    <aside className="relative flex w-[11px] shrink-0 flex-col border-l-2 border-[#c4c6cc] bg-[#efefef]">
      <div className="h-3 border-b border-[#c4c6cc] bg-[#d3d4d9]" />
      <div className="h-[22px] overflow-hidden border-b border-[#c4c6cc] pl-[7px] leading-5 whitespace-nowrap text-[#777]">属性</div>
      <div className="mt-1 ml-0.5 h-6 rounded-tl border-t border-l border-[#b9bbc0] bg-white" />
      <div className="mt-[2px] ml-0.5 h-[740px] border-b border-l-2 border-[#b9bbc0] bg-white">
        <div className="h-[22px] border-b border-[#c4c6cc] bg-[#efefef]" />
        {Array.from({ length: 33 }, (_, index) => (
          <div key={index} className="h-[21px] border-b border-[#d0d0d0]">
            {index === 0 && (
              <svg width="12" height="18" viewBox="0 0 12 18" fill="none" stroke="#555">
                <path d="M14 3.500H3.500l-1 1v10l1 1H14M5 9.500h8" />
              </svg>
            )}
          </div>
        ))}
      </div>
      <div className="pointer-events-none absolute top-[779px] -left-3 overflow-hidden whitespace-nowrap text-[#aaa]">
        <div className="text-xl leading-6">激活</div>
        <div className="text-[15px] leading-5">转到</div>
      </div>
    </aside>
  );
}

const App = () => {
  return (
    <div className="flex h-screen flex-col overflow-hidden bg-white font-['Noto_Sans','Noto_Sans_CJK_SC',sans-serif] text-xs text-[#111]">
      <Ribbon />
      <Selectors />
      <div className="flex min-h-0 flex-1">
        <NavTree />
        <div className="ml-1 flex w-[280px] shrink-0 flex-col">
          <ComponentList />
          <PropertyPanel />
        </div>
        <div className="flex w-1 shrink-0 flex-col pt-44">
          <button aria-label="收起左侧" className="flex h-[100px] items-center bg-[#5f6873]">
            <svg width="4" height="6" viewBox="0 0 4 6"><path d="M4 0v6L1 3z" fill="#c9ccd1" /></svg>
          </button>
        </div>
        <main className="flex min-w-0 flex-1 flex-col">
          <div className="relative h-[451px] shrink-0 overflow-hidden">
            <Drawing />
            <ViewToolbar />
          </div>
          <div className="flex h-1 shrink-0 justify-center">
            <button aria-label="收起下方" className="flex w-[100px] justify-center bg-[#5f6873]">
              <svg width="6" height="3" viewBox="0 0 6 3"><path d="M0 0h6L3 3z" fill="#c9ccd1" /></svg>
            </button>
          </div>
          <RebarEditor />
        </main>
        <div className="flex w-[5px] shrink-0 flex-col pt-44">
          <button aria-label="收起右侧" className="mr-px flex h-[100px] items-center bg-[#5f6873]">
            <svg width="4" height="6" viewBox="0 0 4 6"><path d="M0 0v6l3-3z" fill="#c9ccd1" /></svg>
          </button>
        </div>
        <RightPanel />
      </div>
    </div>
  );
};

export default App;
